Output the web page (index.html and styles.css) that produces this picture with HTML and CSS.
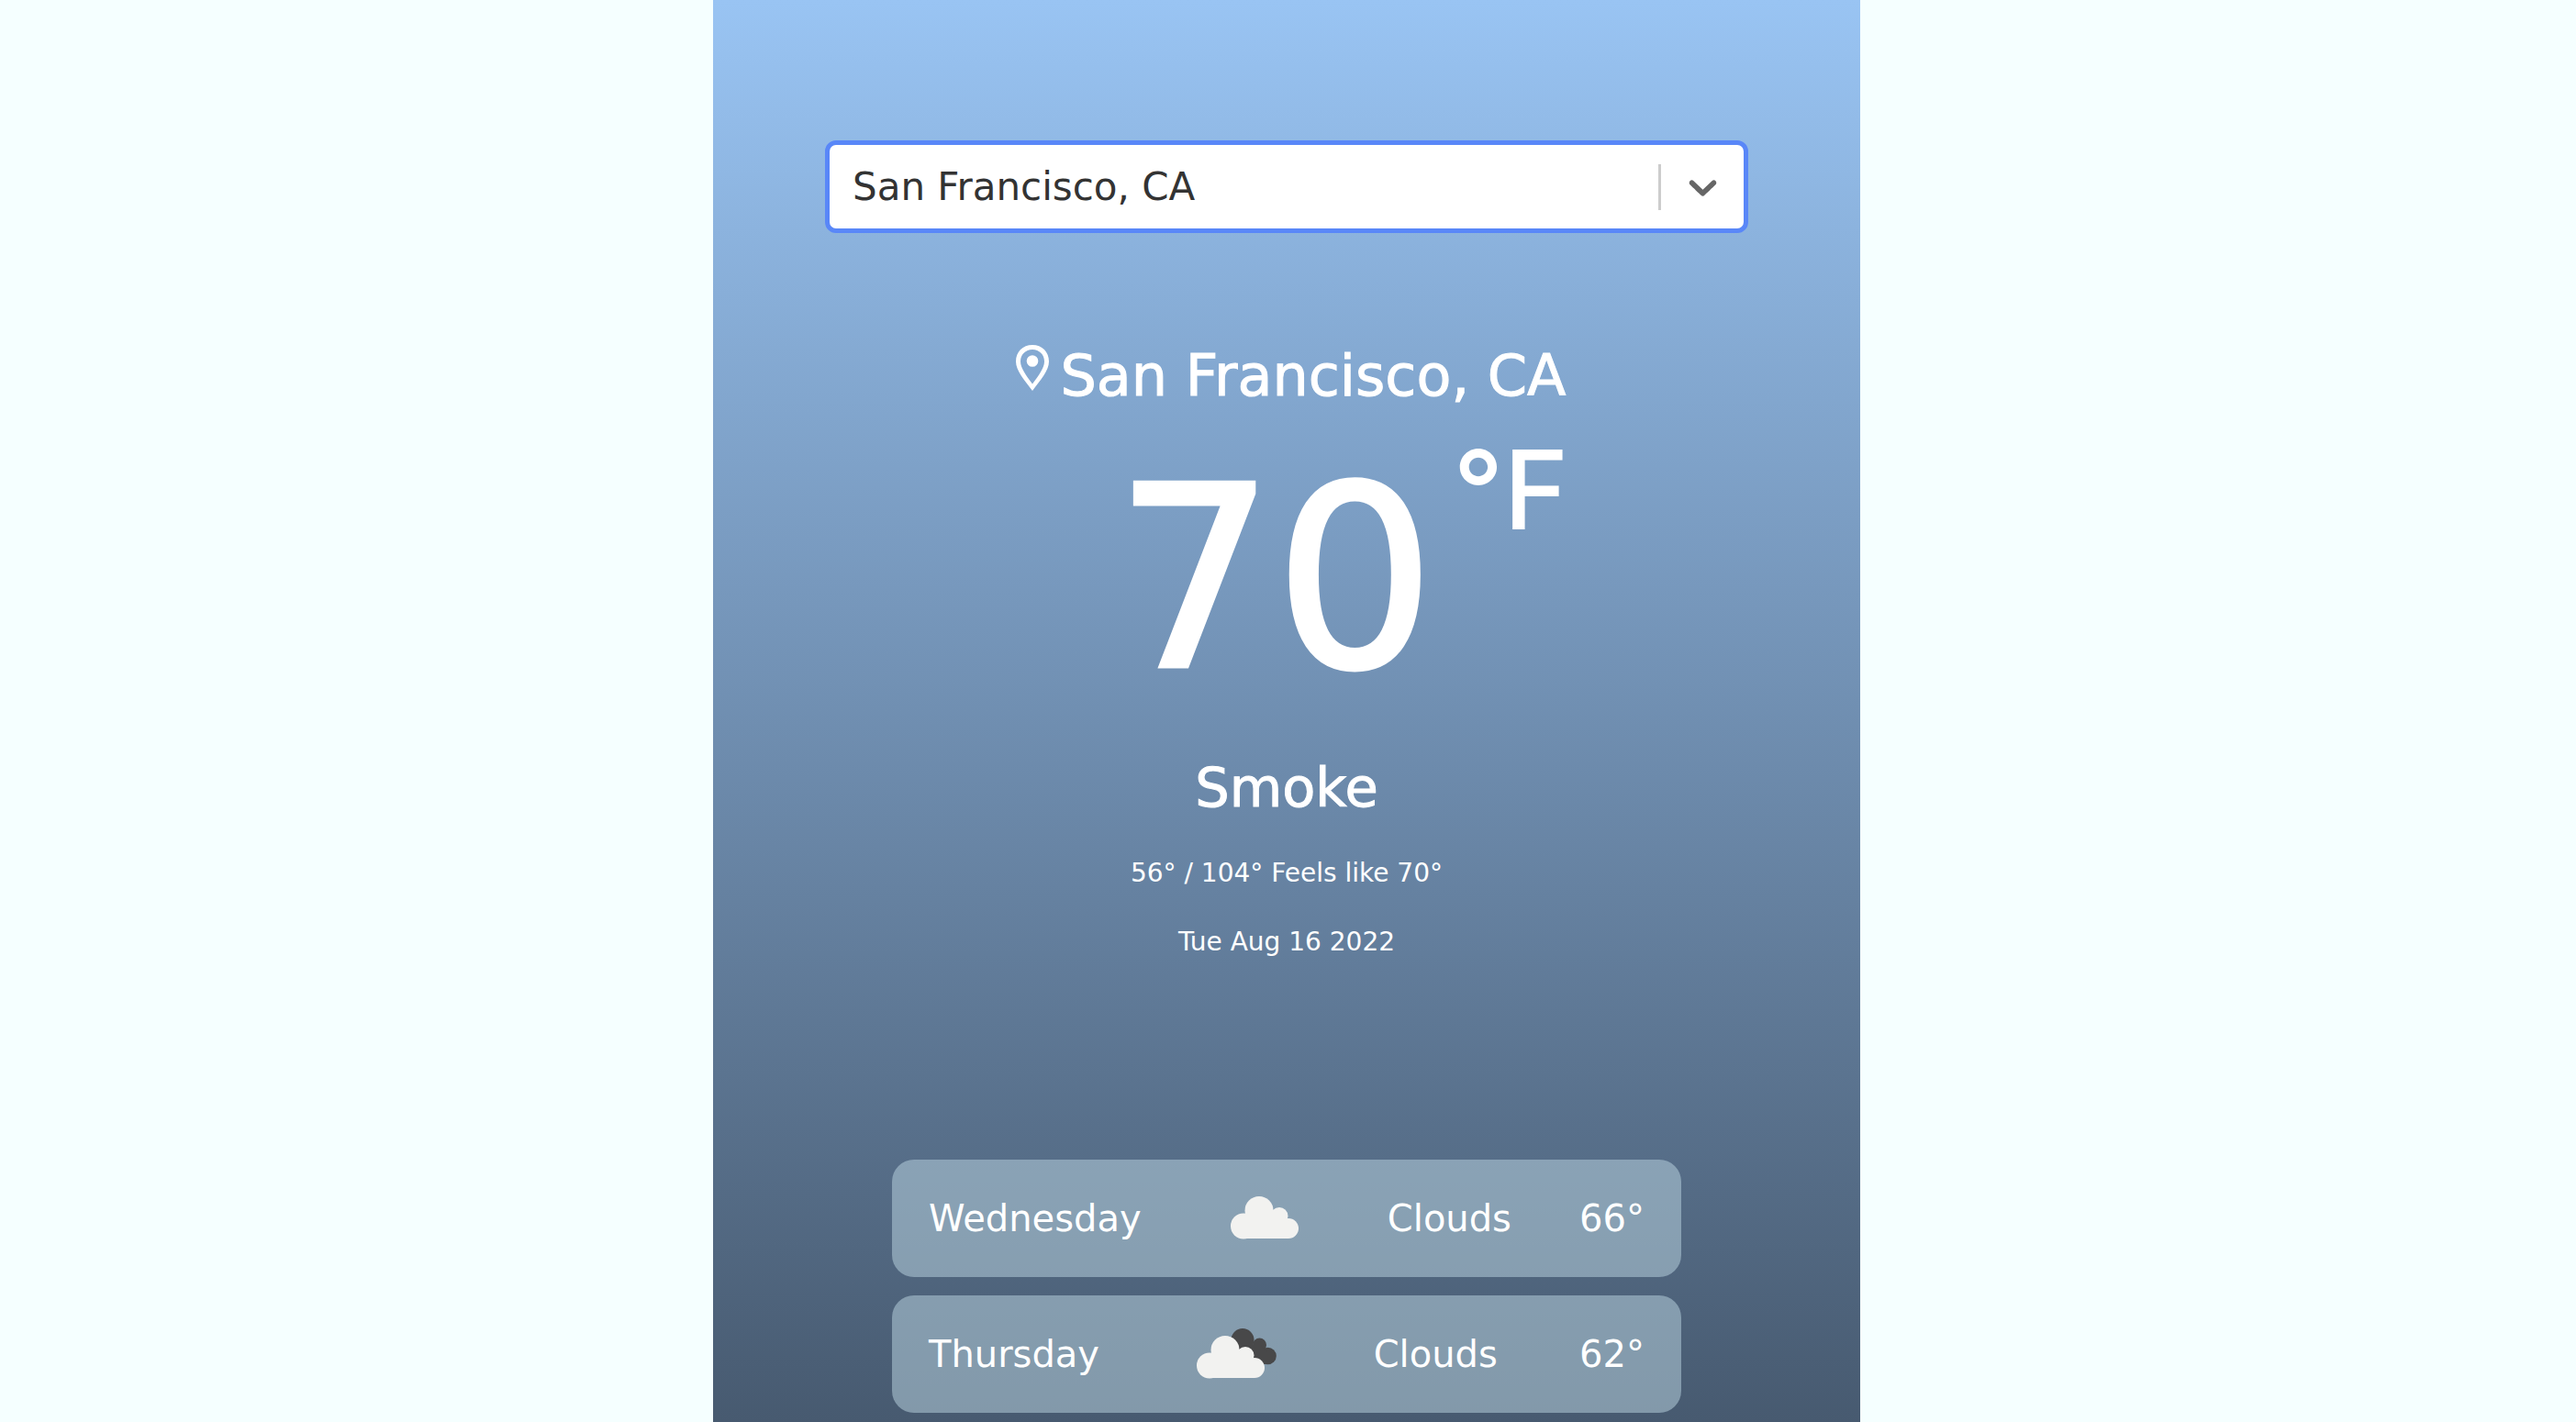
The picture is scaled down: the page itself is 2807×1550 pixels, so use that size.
FILE: index.html
```html
<!DOCTYPE html>
<html lang="en">
<head>
<meta charset="utf-8">
<meta name="viewport" content="width=device-width, initial-scale=1">
<title>Weather</title>
<link rel="stylesheet" href="styles.css">
</head>
<body>
<main class="app">
  <div class="picker">
    <select class="picker-select" aria-label="City">
      <option>San Francisco, CA</option>
    </select>
    <span class="picker-indicator">
      <svg class="picker-chevron" viewBox="0 0 20 20" aria-hidden="true"><path d="M4.516 7.548c0.436-0.446 1.043-0.481 1.576 0l3.908 3.747 3.908-3.747c0.533-0.481 1.141-0.446 1.574 0 0.436 0.445 0.408 1.197 0 1.615-0.406 0.418-4.695 4.502-4.695 4.502-0.217 0.223-0.502 0.335-0.787 0.335s-0.57-0.112-0.789-0.335c0 0-4.287-4.084-4.695-4.502s-0.436-1.17 0-1.615z"/></svg>
    </span>
  </div>

  <section class="current">
    <h1 class="place">
      <svg class="pin" viewBox="0 0 36 50" aria-hidden="true"><path fill-rule="evenodd" d="M18 0C7.500 0 0 7.500 0 18C0 28 9 38 18 50C27 38 36 28 36 18C36 7.500 28.500 0 18 0ZM18 5C25.500 5 31 10.500 31 18C31 25 25 33 18 42.500C11 33 5 25 5 18C5 10.500 10.500 5 18 5Z"/><circle cx="18" cy="17.500" r="6.300"/></svg>
      <span>San Francisco, CA</span>
    </h1>
    <div class="temperature">
      <span class="degrees">70</span>
      <span class="unit">°F</span>
    </div>
    <h2 class="condition">Smoke</h2>
    <p class="detail">56° / 104° Feels like 70°</p>
    <p class="detail">Tue Aug 16 2022</p>
  </section>

  <ul class="forecast">
    <li class="day">
      <span>Wednesday</span>
      <svg class="day-icon" viewBox="0 0 120 88" role="img" aria-label="Cloudy">
        <g class="cloud-light"><circle cx="54" cy="35.500" r="15.500"/><circle cx="76" cy="41.500" r="9.500"/><circle cx="86" cy="55" r="11"/><circle cx="37" cy="52.500" r="14"/><path d="M37 45H86V66H37Z"/><path d="M45 38H78V50H45Z"/></g>
      </svg>
      <span>Clouds</span>
      <span>66°</span>
    </li>
    <li class="day">
      <span>Thursday</span>
      <svg class="day-icon" viewBox="0 0 120 88" role="img" aria-label="Broken clouds">
        <g class="cloud-dark"><circle cx="67" cy="28.500" r="12.500"/><circle cx="85.500" cy="34" r="7.500"/><circle cx="94.500" cy="46" r="9.300"/><path d="M67 34H87L94 42V55H80Z"/></g>
        <g class="cloud-light" transform="translate(-6 4)"><circle cx="54" cy="35.500" r="15.500"/><circle cx="76" cy="41.500" r="9.500"/><circle cx="86" cy="55" r="11"/><circle cx="37" cy="52.500" r="14"/><path d="M37 45H86V66H37Z"/><path d="M45 38H78V50H45Z"/></g>
      </svg>
      <span>Clouds</span>
      <span>62°</span>
    </li>
  </ul>
</main>
</body>
</html>
```
FILE: styles.css
```css
* {
  box-sizing: border-box;
}

body {
  margin: 0;
  padding-right: 3px;
  background: #f5ffff;
  color: #fff;
  font-family: "DejaVu Sans", sans-serif;
}

.app {
  display: flex;
  flex-direction: column;
  align-items: center;
  width: 100%;
  max-width: 1250px;
  min-height: 100vh;
  margin: 0 auto;
  padding: 153px 122px 10px;
  background: linear-gradient(#99c4f3, #475a70);
}

.picker {
  display: grid;
  align-items: center;
  width: 100%;
}

.picker-select,
.picker-indicator {
  grid-area: 1 / 1;
}

.picker-select {
  appearance: none;
  width: 100%;
  height: 101px;
  padding: 0 120px 0 25px;
  border: 5px solid #5987f8;
  border-radius: 12px;
  background: #fff;
  color: #333;
  font: 42px "DejaVu Sans", sans-serif;
}

.picker-indicator {
  display: flex;
  justify-self: end;
  align-items: center;
  height: 50px;
  padding: 0 24px 0 20px;
  border-left: 3px solid #ccc;
  pointer-events: none;
}

.picker-chevron {
  width: 51px;
  height: 51px;
  fill: #666;
}

.current {
  display: flex;
  flex-direction: column;
  align-items: center;
  width: 100%;
  padding-top: 116px;
}

.place {
  display: flex;
  gap: 12px;
  margin: 0;
  padding-left: 10px;
  font-size: 62px;
  font-weight: 400;
  line-height: 80px;
  -webkit-text-stroke: 1px #fff;
}

.pin {
  width: 36px;
  height: 50px;
  margin-top: 6px;
  fill: #fff;
}

.temperature {
  display: flex;
  align-items: flex-start;
  gap: 20px;
  margin-top: 26px;
  padding-left: 120px;
}

.degrees {
  font-size: 274px;
  line-height: 312px;
  -webkit-text-stroke: 5px #fff;
}

.unit {
  font-family: Inter, sans-serif;
  font-size: 120px;
  font-weight: 500;
  line-height: 116px;
}

.condition {
  margin: 33px 0 0;
  font-size: 59px;
  font-weight: 400;
  line-height: 76px;
  -webkit-text-stroke: 1px #fff;
}

.detail {
  margin: 35px 0 0;
  font-size: 28px;
  line-height: 40px;
}

.forecast {
  display: flex;
  flex-direction: column;
  gap: 20px;
  width: 100%;
  max-width: 860px;
  margin: 217px 0 0;
  padding: 0;
  list-style: none;
}

.day {
  display: flex;
  justify-content: space-between;
  align-items: center;
  padding: 20px 40px;
  border-radius: 24px;
  background: rgba(190, 216, 228, 0.5);
  font-size: 40px;
}

.day-icon {
  width: 120px;
  height: 88px;
}

.cloud-light {
  fill: #f2f2f0;
}

.cloud-dark {
  fill: #484849;
}
```
